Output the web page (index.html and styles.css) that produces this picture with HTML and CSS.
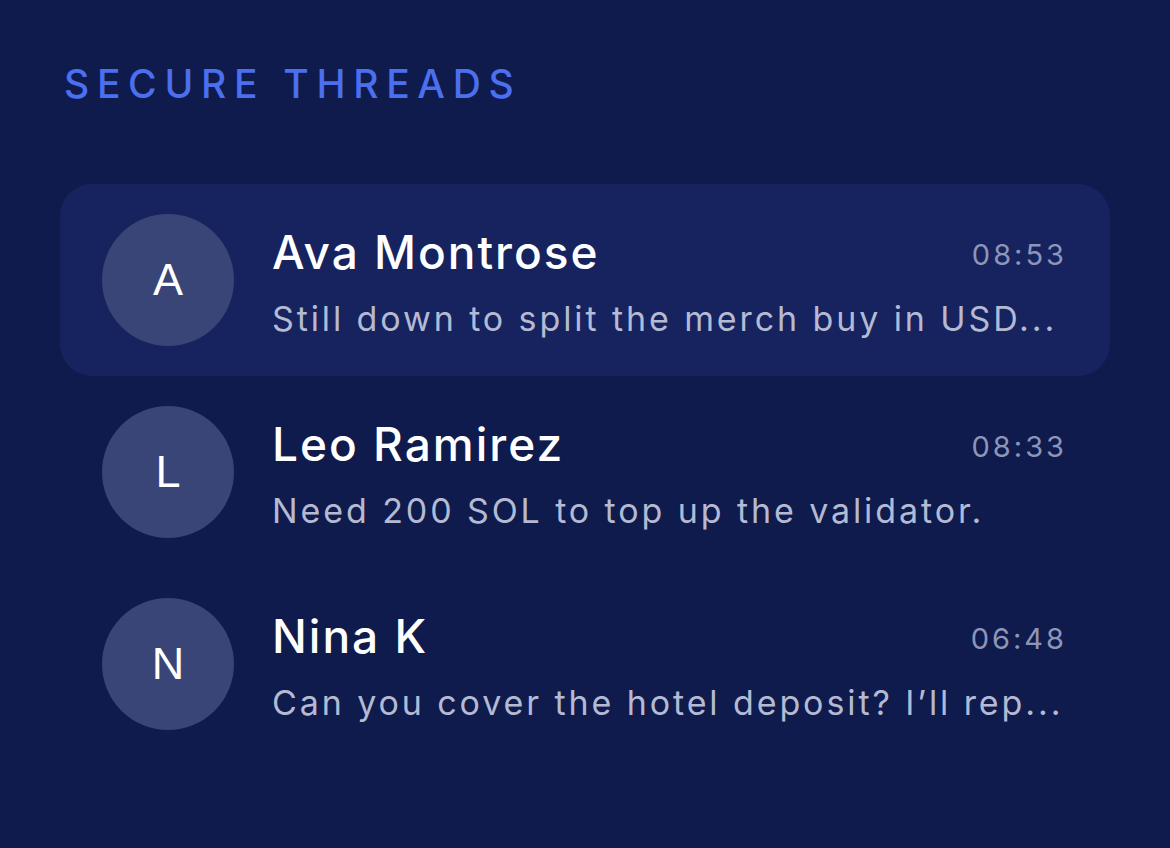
FILE: index.html
```html
<!DOCTYPE html>
<html lang="en">
<head>
<meta charset="utf-8">
<title>Secure Threads</title>
<link rel="stylesheet" href="styles.css">
</head>
<body>
<main class="panel">
  <h1 class="heading">SECURE THREADS</h1>
  <ul class="threads">
    <li class="thread active">
      <div class="avatar">A</div>
      <div class="body">
        <div class="top"><span class="name">Ava Montrose</span><span class="time">08:53</span></div>
        <div class="preview">Still down to split the merch buy in USD...</div>
      </div>
    </li>
    <li class="thread">
      <div class="avatar">L</div>
      <div class="body">
        <div class="top"><span class="name">Leo Ramirez</span><span class="time">08:33</span></div>
        <div class="preview">Need 200 SOL to top up the validator.</div>
      </div>
    </li>
    <li class="thread">
      <div class="avatar">N</div>
      <div class="body">
        <div class="top"><span class="name">Nina K</span><span class="time">06:48</span></div>
        <div class="preview">Can you cover the hotel deposit? I’ll rep...</div>
      </div>
    </li>
  </ul>
</main>
</body>
</html>
```
FILE: styles.css
```css
html, body {
  margin: 0;
  padding: 0;
  background: #0e1b4c;
  height: 100%;
}
body {
  font-family: "Inter", "Open Sans", sans-serif;
  color: #ffffff;
}
.panel {
  padding: 60px 60px 0 60px;
}
.heading {
  margin: 0 0 76px 4px;
  font-family: "Inter", sans-serif;
  font-weight: 500;
  font-size: 39px;
  line-height: 48px;
  letter-spacing: 7.7px;
  color: #4c6ff0;
}
.threads {
  list-style: none;
  margin: 0;
  padding: 0;
}
.thread {
  display: flex;
  align-items: center;
  gap: 38px;
  height: 192px;
  padding: 0 43px 0 42px;
  box-sizing: border-box;
  border-radius: 32px;
}
.thread.active {
  background: #16235f;
}
.avatar {
  flex: 0 0 132px;
  height: 132px;
  border-radius: 50%;
  background: #3a4577;
  display: flex;
  align-items: center;
  justify-content: center;
  font-family: "Liberation Sans", Arial, sans-serif;
  font-size: 45px;
  color: #ffffff;
}
.body {
  flex: 1;
  min-width: 0;
  display: flex;
  flex-direction: column;
  gap: 20px;
  padding-top: 6px;
}
.top {
  display: flex;
  justify-content: space-between;
  align-items: baseline;
}
.name {
  font-size: 46px;
  font-weight: 500;
  line-height: 52px;
  letter-spacing: 2px;
}
.time {
  font-size: 29px;
  color: #8d95b8;
  letter-spacing: 3px;
  position: relative;
  top: -4px;
}
.preview {
  font-size: 34px;
  line-height: 42px;
  color: #b4bad3;
  letter-spacing: 2.9px;
  white-space: nowrap;
}
```
